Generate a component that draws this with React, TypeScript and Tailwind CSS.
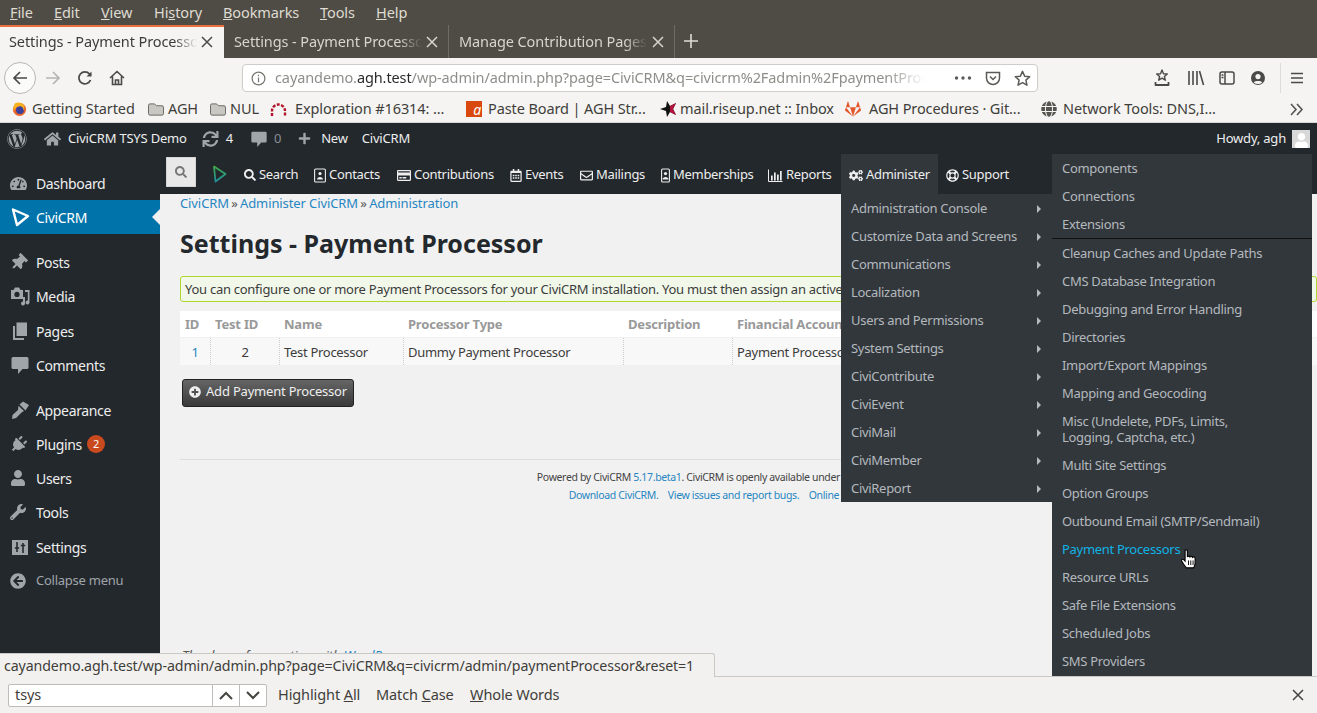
import { ReactNode } from 'react';
import {
  FaCogs,
  FaFolder,
  FaGitlab,
  FaGlobe,
  FaHome,
  FaPlug,
  FaPlus,
  FaPlusCircle,
  FaRegCalendarAlt,
  FaRegCreditCard,
  FaRegEnvelope,
  FaRegLifeRing,
  FaSearch,
  FaSync,
  FaTachometerAlt,
  FaThumbtack,
  FaUser,
  FaWordpress,
  FaWrench,
  FaArrowCircleLeft,
} from 'react-icons/fa';

const CiviLogo = ({ className }: { className: string }) => (
  <svg className={className} viewBox="0 0 20 20" fill="none" stroke="currentColor" strokeWidth="2.4" strokeLinejoin="round">
    <path d="M3 2.5 L18 9 L7 18 Z" />
  </svg>
);

const NavLogo = () => (
  <svg className="ml-[16px] mr-[17px]" width="15" height="18" viewBox="0 0 15 18" fill="none" strokeWidth="1.7" strokeLinejoin="round">
    <defs>
      <linearGradient id="civi-nav" x1="0" y1="0" x2="0" y2="1">
        <stop offset="0" stopColor="#3fae49" />
        <stop offset="1" stopColor="#1f8f9e" />
      </linearGradient>
    </defs>
    <path d="M2 1.5 L13.5 9 L3.5 16.5 Z" stroke="url(#civi-nav)" />
  </svg>
);

const CommentIcon = ({ className }: { className: string }) => (
  <svg className={className} viewBox="0 0 20 20" fill="currentColor">
    <path d="M3 2 H17 Q18.5 2 18.5 3.5 V12.5 Q18.5 14 17 14 H12.5 L8 19 V14 H3 Q1.5 14 1.5 12.5 V3.5 Q1.5 2 3 2 Z" />
  </svg>
);

const MediaIcon = () => (
  <svg className="h-[20px] w-[20px]" viewBox="0 0 20 20" fill="currentColor">
    <path
      fillRule="evenodd"
      d="M1 4 H3.5 L5 1.5 H9 L10.5 4 H13 V13 H1 Z M7 5.8 A2.6 2.6 0 1 0 7 11 A2.6 2.6 0 1 0 7 5.8 Z"
    />
    <path d="M15 4 H19.5 V16.5 A2 2 0 1 1 17.8 14.5 V6 H15 Z" />
    <path d="M13 11 H15 V17.5 A2 2 0 1 1 13 15.5 Z" />
  </svg>
);

const PagesIcon = () => (
  <svg className="h-[20px] w-[20px]" viewBox="0 0 20 20" fill="currentColor">
    <path d="M6.5 1.5 H17 V15 H6.5 Z" />
    <path d="M3 5 H5 V17 H14 V19 H3 Z" />
  </svg>
);

const BrushIcon = () => (
  <svg className="h-[20px] w-[20px]" viewBox="0 0 20 20" fill="currentColor">
    <path d="M9.5 4.5 L13 1.5 L19 5 L15.5 10.5 Z" />
    <path d="M8.5 5.8 L14 11 L11.5 12.5 L6 18 L2 19 L2.5 15 L8 10 Z" />
  </svg>
);

const SettingsIcon = () => (
  <svg className="h-[20px] w-[20px]" viewBox="0 0 20 20">
    <rect x="2" y="3" width="16" height="15" fill="currentColor" />
    <path d="M7 5 V15 M13 6 V16 M4.8 11 H9.2 M10.8 8.5 H15.2" stroke="#23282d" strokeWidth="1.6" fill="none" />
  </svg>
);

const BadgeIcon = ({ width }: { width: number }) => (
  <svg width={width} height="15" viewBox={`0 0 ${width} 15`} fill="none" stroke="currentColor" strokeWidth="1.1">
    <rect x="0.6" y="1" width={width - 1.2} height="13" rx="1" />
    <circle cx={width / 2} cy="5.6" r="1.6" fill="currentColor" stroke="none" />
    <path d={`M${width / 2 - 3} 11.5 C${width / 2 - 3} 8 ${width / 2 + 3} 8 ${width / 2 + 3} 11.5 Z`} fill="currentColor" stroke="none" />
  </svg>
);

const ChartIcon = () => (
  <svg width="15" height="13" viewBox="0 0 15 13" fill="currentColor">
    <path d="M0.5 0.5 V12.5 H14.5" fill="none" stroke="currentColor" strokeWidth="1" />
    <rect x="3" y="6.5" width="1.7" height="5" />
    <rect x="6" y="3.5" width="1.7" height="8" />
    <rect x="9" y="5.5" width="1.7" height="6" />
    <rect x="12" y="2" width="1.7" height="9.5" />
  </svg>
);

const FirefoxIcon = () => (
  <svg className="mr-[5px]" width="15" height="16" viewBox="0 0 16 16">
    <circle cx="8" cy="8.5" r="7" fill="#e8662b" />
    <circle cx="8.5" cy="9" r="4.2" fill="#3a3f9c" />
    <path d="M3 2 C2 5 1 7 2 10 C3 7 6 4.5 9 5 C11 5.3 12.5 7 12 9.5 C13.5 7.5 14 4 11 2 C8 0.5 5 1 3 2 Z" fill="#f7b01f" />
  </svg>
);

const Close = ({ className = '' }: { className?: string }) => (
  <svg className={className} width="12" height="12" viewBox="0 0 12 12" stroke="currentColor" strokeWidth="1.5">
    <path d="M1 1 L11 11 M11 1 L1 11" />
  </svg>
);

const MenuBar = () => {
  const items: [ReactNode, string][] = [
    [<><u>F</u>ile</>, 'w-[44px]'],
    [<><u>E</u>dit</>, 'w-[47px]'],
    [<><u>V</u>iew</>, 'w-[53px]'],
    [<>Hi<u>s</u>tory</>, 'w-[69px]'],
    [<><u>B</u>ookmarks</>, 'w-[97px]'],
    [<><u>T</u>ools</>, 'w-[56px]'],
    [<><u>H</u>elp</>, 'w-[50px]'],
  ];
  return (
    <div className="flex h-[25px] shrink-0 items-center bg-[#4f4c45] pl-[10px] text-[14.5px] tracking-[-0.1px] text-[#dfdbd2]">
      {items.map(([label, width], i) => (
        <span key={i} className={width}>{label}</span>
      ))}
    </div>
  );
};

const tabFade = 'w-[188px] overflow-hidden whitespace-nowrap [mask-image:linear-gradient(to_right,black_88%,transparent)]';

const TabBar = () => (
  <div className="flex h-[33px] shrink-0 bg-[#4f4c45] text-[14.5px] tracking-[-0.1px]">
    <div className="flex w-[224px] items-center border-t-2 border-[#e8703a] bg-[#f5f4f2] pb-[2px] pl-[9px] pr-[11px] text-[#3d3c38]">
      <span className={tabFade}>Settings - Payment Processor</span>
      <Close className="ml-auto text-[#4a4a46]" />
    </div>
    <div className="flex w-[225px] items-center border-r border-[#6f6c65] pl-[10px] pr-[10px] text-[#d8d5cd]">
      <span className={tabFade}>Settings - Payment Processor</span>
      <Close className="ml-auto text-[#d8d5cd]" />
    </div>
    <div className="flex w-[226px] items-center border-r border-[#6f6c65] pl-[10px] pr-[10px] text-[#d8d5cd]">
      <span className={tabFade}>Manage Contribution Pages</span>
      <Close className="ml-auto text-[#d8d5cd]" />
    </div>
    <svg className="ml-[8px] mt-[8px] text-[#dfdbd2]" width="16" height="16" viewBox="0 0 16 16" stroke="currentColor" strokeWidth="1.6">
      <path d="M8 1 V15 M1 8 H15" />
    </svg>
  </div>
);

const Toolbar = () => (
  <div className="flex h-[38px] shrink-0 items-center bg-[#f5f4f2] pt-[2px] text-[#4a4a46]">
    <div className="ml-[4px] flex h-[32px] w-[32px] items-center justify-center rounded-full border border-[#b8b6b2] bg-[#fbfbfa]">
      <svg width="16" height="16" viewBox="0 0 16 16" fill="none" stroke="currentColor" strokeWidth="1.7">
        <path d="M15 8 H2 M8 2 L2 8 L8 14" />
      </svg>
    </div>
    <svg className="ml-[9px] text-[#b5b4b0]" width="16" height="16" viewBox="0 0 16 16" fill="none" stroke="currentColor" strokeWidth="1.7">
      <path d="M1 8 H14 M8 2 L14 8 L8 14" />
    </svg>
    <svg className="ml-[16px]" width="16" height="16" viewBox="0 0 16 16" fill="none" stroke="currentColor" strokeWidth="1.8">
      <path d="M13.5 10 A6 6 0 1 1 12.5 4 L14 5.5" />
      <path d="M14.5 1.5 V6.5 H9.5" fill="currentColor" stroke="none" />
    </svg>
    <svg className="ml-[16px]" width="16" height="16" viewBox="0 0 16 16" fill="none" stroke="currentColor" strokeWidth="1.6">
      <path d="M1 8 L8 1.5 L15 8 M3.5 6.5 V14.5 H12.5 V6.5 M6.5 14.5 V10 H9.5 V14.5" />
    </svg>
    <div className="ml-[117px] flex h-[28px] w-[796px] items-center rounded-[4px] border border-[#cfcdc9] bg-white pl-[8px] text-[14.5px] tracking-[-0.1px]">
      <svg className="text-[#77766f]" width="15" height="15" viewBox="0 0 16 16" fill="none" stroke="currentColor" strokeWidth="1.3">
        <circle cx="8" cy="8" r="6.8" />
        <path d="M8 7 V12 M8 4 V5.6" />
      </svg>
      <span className="ml-[9px] w-[650px] overflow-hidden whitespace-nowrap text-[#8e8e8a] [mask-image:linear-gradient(to_right,black_94%,transparent)]">
        cayandemo.<span className="text-[#2b2b2b]">agh.test</span>/wp-admin/admin.php?page=CiviCRM&amp;q=civicrm%2Fadmin%2FpaymentProcessor
      </span>
      <span className="ml-auto flex items-center gap-[13px] pr-[6px] text-[#5a5a56]">
        <svg width="18" height="4" viewBox="0 0 18 4" fill="currentColor">
          <circle cx="2.5" cy="2" r="1.7" />
          <circle cx="9" cy="2" r="1.7" />
          <circle cx="15.5" cy="2" r="1.7" />
        </svg>
        <svg width="16" height="16" viewBox="0 0 16 16" fill="none" stroke="currentColor" strokeWidth="1.5">
          <path d="M1.5 2.5 H14.5 V8 A6.5 6.5 0 0 1 1.5 8 Z M5 6.5 L8 9.5 L11 6.5" />
        </svg>
        <svg width="17" height="17" viewBox="0 0 16 16" fill="none" stroke="currentColor" strokeWidth="1.4" strokeLinejoin="round">
          <path d="M8 1.3 L10 5.8 L14.8 6.3 L11.2 9.5 L12.2 14.3 L8 11.8 L3.8 14.3 L4.8 9.5 L1.2 6.3 L6 5.8 Z" />
        </svg>
      </span>
    </div>
    <svg className="ml-[116px]" width="16" height="18" viewBox="0 0 16 18" fill="none" stroke="currentColor" strokeWidth="1.4" strokeLinejoin="round">
      <path d="M8 1 L9.5 4.7 L13.3 5 L10.4 7.5 L11.3 11.2 L8 9.2 L4.7 11.2 L5.6 7.5 L2.7 5 L6.5 4.7 Z" />
      <path d="M1.5 13 V16 H14.5 V13" strokeWidth="1.8" />
    </svg>
    <svg className="ml-[17px]" width="18" height="16" viewBox="0 0 18 16" fill="none" stroke="currentColor" strokeWidth="1.6">
      <path d="M2 1 V15 M6 1 V15 M10 1 V15 M12.5 1 L16.5 15" />
    </svg>
    <svg className="ml-[14px]" width="16" height="16" viewBox="0 0 16 16" fill="none" stroke="currentColor" strokeWidth="1.5">
      <rect x="1" y="2" width="14" height="12" rx="2" />
      <path d="M6 2 V14 M2.5 5 H4.5 M2.5 7.5 H4.5" />
    </svg>
    <svg className="ml-[15px]" width="16" height="16" viewBox="0 0 16 16" fill="currentColor">
      <path fillRule="evenodd" d="M8 1 A7 7 0 1 1 8 15 A7 7 0 1 1 8 1 Z M8 4 A2.6 2.6 0 1 0 8 9.2 A2.6 2.6 0 1 0 8 4 Z M3.8 12.4 A6 6 0 0 0 12.2 12.4 C11 10.5 5 10.5 3.8 12.4 Z" />
    </svg>
    <div className="ml-[14px] h-[30px] w-px bg-[#dedcd8]" />
    <svg className="ml-[9px]" width="14" height="14" viewBox="0 0 14 14" stroke="currentColor" strokeWidth="1.7">
      <path d="M1 2.5 H13 M1 7 H13 M1 11.5 H13" />
    </svg>
  </div>
);

const Bookmark = ({ icon, label, width }: { icon: ReactNode; label: string; width: string }) => (
  <div className={`flex items-center ${width}`}>
    {icon}
    <span className="whitespace-nowrap">{label}</span>
  </div>
);

const folder = <FaFolder className="mr-[4px] h-[15px] w-[16px] text-[#c9c7c1] [stroke:#5d5c58] [stroke-width:30px]" />;

const BookmarksBar = () => (
  <div className="flex h-[26px] shrink-0 items-center bg-[#f5f4f2] pl-[12px] text-[14.5px] tracking-[-0.1px] text-[#3f3e3a]">
    <Bookmark width="w-[136px]" label="Getting Started" icon={<FirefoxIcon />} />
    <Bookmark width="w-[62px]" label="AGH" icon={folder} />
    <Bookmark width="w-[60px]" label="NUL" icon={folder} />
    <Bookmark
      width="w-[196px]"
      label="Exploration #16314: ..."
      icon={
        <svg className="mr-[8px]" width="17" height="15" viewBox="0 0 17 15" fill="none" stroke="#b3132b" strokeWidth="2.4" strokeDasharray="3 1.4">
          <path d="M2 14 V9 A6.5 6.5 0 0 1 15 9 V14" />
        </svg>
      }
    />
    <Bookmark
      width="w-[194px]"
      label="Paste Board | AGH Str..."
      icon={
        <span className="mr-[6px] flex h-[16px] w-[16px] items-end justify-end bg-[#d9480f] pr-[1px] text-[14px] italic leading-[14px] text-white">a</span>
      }
    />
    <Bookmark
      width="w-[185px]"
      label="mail.riseup.net :: Inbox"
      icon={
        <svg className="mr-[4px]" width="16" height="18" viewBox="0 0 16 18">
          <path d="M0 9 L6 7 L7 1 L10 6 L16 3 L13 9 L16 15 L10 12 L7 17 L6 11 Z" fill="#111" />
          <path d="M10 6 L16 3 L13 9 L16 15 L10 12 Z" fill="#b3123d" />
        </svg>
      }
    />
    <Bookmark width="w-[196px]" label="AGH Procedures · Git..." icon={<FaGitlab className="mr-[8px] h-[16px] w-[16px] text-[#e2572b]" />} />
    <Bookmark width="w-[230px]" label="Network Tools: DNS,I..." icon={<FaGlobe className="mr-[6px] h-[16px] w-[16px] text-[#55554f]" />} />
    <svg className="ml-[18px] text-[#55554f]" width="15" height="13" viewBox="0 0 15 13" fill="none" stroke="currentColor" strokeWidth="1.6">
      <path d="M2 1 L7 6.5 L2 12 M8 1 L13 6.5 L8 12" />
    </svg>
  </div>
);

const AdminBar = () => (
  <div className="flex h-[32px] shrink-0 items-center border-t border-[#d9d8d5] bg-[#23282d] pl-[7px] pr-[7px] text-[13px] tracking-[-0.2px] text-[#eeeeee]">
    <FaWordpress className="h-[20px] w-[20px] text-[#a0a5aa]" />
    <FaHome className="ml-[17px] h-[16px] w-[17px] text-[#a0a5aa]" />
    <span className="ml-[7px]">CiviCRM TSYS Demo</span>
    <FaSync className="ml-[15px] h-[16px] w-[17px] text-[#a0a5aa]" />
    <span className="ml-[7px]">4</span>
    <CommentIcon className="ml-[17px] h-[18px] w-[18px] text-[#a0a5aa]" />
    <span className="ml-[6px] text-[#888d92]">0</span>
    <FaPlus className="ml-[17px] h-[13px] w-[13px] text-[#a0a5aa]" />
    <span className="ml-[10px]">New</span>
    <span className="ml-[14px]">CiviCRM</span>
    <span className="ml-auto mr-[6px]">Howdy, agh</span>
    <div className="flex h-[18px] w-[18px] items-end justify-center overflow-hidden bg-[#d8d8d8]">
      <FaUser className="h-[15px] w-[15px] text-white" />
    </div>
  </div>
);

type SideItem = { label: string; icon: ReactNode; gap?: boolean; nudge?: boolean; active?: boolean; badge?: string };

const sideItems: SideItem[] = [
  { label: 'Dashboard', icon: <FaTachometerAlt className="h-[17px] w-[17px]" /> },
  { label: 'CiviCRM', icon: <CiviLogo className="h-[20px] w-[20px]" />, active: true },
  { label: 'Posts', icon: <FaThumbtack className="h-[17px] w-[17px] rotate-45" />, gap: true },
  { label: 'Media', icon: <MediaIcon /> },
  { label: 'Pages', icon: <PagesIcon />, nudge: true },
  { label: 'Comments', icon: <CommentIcon className="h-[20px] w-[20px]" /> },
  { label: 'Appearance', icon: <BrushIcon />, gap: true },
  { label: 'Plugins', icon: <FaPlug className="h-[17px] w-[17px] rotate-45" />, badge: '2' },
  { label: 'Users', icon: <FaUser className="h-[16px] w-[16px]" /> },
  { label: 'Tools', icon: <FaWrench className="h-[16px] w-[16px]" /> },
  { label: 'Settings', icon: <SettingsIcon />, nudge: true },
];

const Sidebar = () => (
  <div className="w-[160px] shrink-0 bg-[#23282d] pt-[12px] text-[14px] tracking-[-0.35px] text-[#eeeeee]">
    {sideItems.map((item) => (
      <div
        key={item.label}
        className={`relative flex h-[34px] items-center pl-[10px] ${item.gap ? 'mt-[11px]' : ''} ${item.nudge ? 'mt-[1px]' : ''} ${
          item.active ? 'bg-[#0073aa] text-white' : ''
        }`}
      >
        <span className={`flex w-[26px] justify-start ${item.active ? 'text-white' : 'text-[#a0a5aa]'}`}>{item.icon}</span>
        <span>{item.label}</span>
        {item.badge ? (
          <span className="ml-[5px] flex h-[18px] w-[18px] items-center justify-center rounded-full bg-[#ca4a1f] text-[11px] text-white">
            {item.badge}
          </span>
        ) : null}
        {item.active ? (
          <span className="absolute right-0 top-[9px] h-0 w-0 border-y-[8px] border-r-[8px] border-y-transparent border-r-[#f1f1f1]" />
        ) : null}
      </div>
    ))}
    <div className="flex h-[33px] items-center pl-[10px] text-[13px] tracking-[-0.25px] text-[#a0a5aa]">
      <FaArrowCircleLeft className="mr-[10px] h-[16px] w-[16px]" />
      <span>Collapse menu</span>
    </div>
  </div>
);

const navItems: { label: string; icon: ReactNode; width: string }[] = [
  { label: 'Search', icon: <FaSearch className="h-[12px] w-[12px]" />, width: 'w-[70px]' },
  { label: 'Contacts', icon: <BadgeIcon width={12} />, width: 'w-[83px]' },
  { label: 'Contributions', icon: <FaRegCreditCard className="h-[13px] w-[14px]" />, width: 'w-[113px]' },
  { label: 'Events', icon: <FaRegCalendarAlt className="h-[13px] w-[12px]" />, width: 'w-[70px]' },
  { label: 'Mailings', icon: <FaRegEnvelope className="h-[13px] w-[13px]" />, width: 'w-[81px]' },
  { label: 'Memberships', icon: <BadgeIcon width={9} />, width: 'w-[107px]' },
  { label: 'Reports', icon: <ChartIcon />, width: 'w-[73px]' },
];

const adminMenu = [
  'Administration Console',
  'Customize Data and Screens',
  'Communications',
  'Localization',
  'Users and Permissions',
  'System Settings',
  'CiviContribute',
  'CiviEvent',
  'CiviMail',
  'CiviMember',
  'CiviReport',
];

const CiviNav = () => (
  <div className="relative flex h-[40px] shrink-0 items-center bg-[#23282d] pl-[6px] text-[13px] tracking-[-0.3px] text-[#eeeeee]">
    <div className="-mt-[4px] flex h-[30px] w-[30px] items-center justify-center border border-[#d5d5d5] bg-[#e8e8e8] text-[#777]">
      <FaSearch className="h-[12px] w-[12px]" />
    </div>
    <NavLogo />
    {navItems.map((item) => (
      <div key={item.label} className={`mt-[2px] flex items-center gap-[3px] ${item.width}`}>
        {item.icon}
        <span>{item.label}</span>
      </div>
    ))}
    <div className="relative flex h-[40px] w-[97px] items-center gap-[3px] bg-[#32373c] pl-[8px] pt-[2px]">
      <FaCogs className="h-[13px] w-[14px]" />
      <span>Administer</span>
      <div className="absolute left-0 top-[40px] z-10 w-[211px] bg-[#32373c] text-[#b4b9be]">
        {adminMenu.map((label) => (
          <div key={label} className="flex h-[28px] items-center justify-between pl-[10px] pr-[11px] pt-[2px]">
            <span className="whitespace-nowrap">{label}</span>
            <span className="h-0 w-0 border-y-[4px] border-l-[4px] border-y-transparent border-l-[#b4b9be]" />
          </div>
        ))}
      </div>
    </div>
    <div className="mt-[2px] flex items-center gap-[3px] pl-[8px]">
      <FaRegLifeRing className="h-[13px] w-[13px]" />
      <span>Support</span>
    </div>
  </div>
);

const settingsTop = ['Components', 'Connections', 'Extensions'];
const settingsRest = [
  'Cleanup Caches and Update Paths',
  'CMS Database Integration',
  'Debugging and Error Handling',
  'Directories',
  'Import/Export Mappings',
  'Mapping and Geocoding',
];
const settingsEnd = [
  'Multi Site Settings',
  'Option Groups',
  'Outbound Email (SMTP/Sendmail)',
  'Payment Processors',
  'Resource URLs',
  'Safe File Extensions',
  'Scheduled Jobs',
  'SMS Providers',
];

const SubRow = ({ label }: { label: string }) => (
  <div className={`flex h-[28px] items-center pt-[2px] ${label === 'Payment Processors' ? 'text-[#10b3e6]' : ''}`}>{label}</div>
);

const SettingsMenu = () => (
  <div className="absolute bottom-0 left-[1052px] top-[32px] z-10 w-[260px] overflow-hidden bg-[#32373c] pl-[10px] text-[13px] tracking-[-0.3px] text-[#b4b9be]">
    {settingsTop.map((label) => (
      <SubRow key={label} label={label} />
    ))}
    <div className="-ml-[10px] h-px bg-[#111]" />
    {settingsRest.map((label) => (
      <SubRow key={label} label={label} />
    ))}
    <div className="py-[6px] leading-[16px]">
      Misc (Undelete, PDFs, Limits,
      <br />
      Logging, Captcha, etc.)
    </div>
    {settingsEnd.map((label) => (
      <SubRow key={label} label={label} />
    ))}
  </div>
);

const HandCursor = () => (
  <svg className="absolute left-[1180px] top-[427px] z-20" width="17" height="20" viewBox="0 0 14 17.5">
    <path
      d="M4 1.5 C4 .5 6 .5 6 1.5 V7 C6.5 6 8 6 8.3 7 C9 6 10.3 6.3 10.5 7.3 C11.3 6.6 12.8 7 12.8 8.2 V12 C12.8 14.5 12 15.5 11.5 16.5 H5 C4 15 2 12.5 1 10.5 C.5 9 2 8.5 3 9.5 L4 10.5 Z"
      fill="#fff"
      stroke="#000"
      strokeWidth="1"
    />
    <path d="M7 10 V14 M9 10 V14 M11 10 V14" stroke="#000" strokeWidth="0.8" />
  </svg>
);

const rowCell = 'flex h-full items-center border-r border-dotted border-[#cccccc] px-[4px] pt-[2px]';

const MainContent = () => (
  <div className="min-w-0 flex-1 overflow-hidden bg-[#f1f1f1]">
    <CiviNav />
    <div className="pl-[20px] text-[13px] tracking-[-0.3px] text-[#3c434a]">
      <div className="h-[18px] leading-[18px] tracking-[-0.1px] text-[#2786c2]">
        CiviCRM <span className="-mx-[1px] text-[#555]">»</span> Administer CiviCRM <span className="-mx-[1px] text-[#555]">»</span> Administration
      </div>
      <h1 className="mt-[16px] h-[31px] text-[25px] font-bold leading-[31px] tracking-normal text-[#23282d]">Settings - Payment Processor</h1>
      <div className="mt-[17px] flex h-[26px] w-[1137px] items-center whitespace-nowrap rounded-[3px] border border-[#b0d730] bg-[#f1f8ea] pl-[4px] pt-[2px] tracking-[-0.27px] text-[#3c3c3c]">
        You can configure one or more Payment Processors for your CiviCRM installation. You must then assign an active Payment Processor to each Online Contribution Page.
      </div>
      <div className="mt-[9px] flex h-[26px] w-[1137px] items-center bg-white pt-[1px] font-bold tracking-[-0.2px] text-[#999999]">
        <span className="w-[31px] pl-[5px]">ID</span>
        <span className="w-[69px] pl-[4px]">Test ID</span>
        <span className="w-[124px] pl-[4px]">Name</span>
        <span className="w-[220px] pl-[4px]">Processor Type</span>
        <span className="w-[109px] pl-[4px]">Description</span>
        <span className="whitespace-nowrap pl-[4px]">Financial Account</span>
      </div>
      <div className="mt-px flex h-[27px] w-[1137px] items-center bg-[#f8f8f8] text-[#3c3c3c]">
        <span className={`${rowCell} w-[31px] justify-center text-[#2786c2]`}>1</span>
        <span className={`${rowCell} w-[69px] justify-center`}>2</span>
        <span className={`${rowCell} w-[124px]`}>Test Processor</span>
        <span className={`${rowCell} w-[220px]`}>Dummy Payment Processor</span>
        <span className={`${rowCell} w-[109px]`} />
        <span className="whitespace-nowrap pl-[4px] pt-[2px]">Payment Processor Account</span>
      </div>
      <button className="ml-[2px] mt-[14px] flex h-[28px] w-[172px] items-center rounded-[3px] border border-[#222] bg-gradient-to-b from-[#666666] to-[#3a3a3a] pb-[2px] pl-[6px] tracking-[-0.2px] text-[#eeeeee]">
        <FaPlusCircle className="mr-[5px] h-[12px] w-[12px]" />
        Add Payment Processor
      </button>
      <div className="mr-[20px] mt-[52px] h-px bg-[#dddddd]" />
      <div className="mr-[20px] mt-[8px] pl-[8px] text-center text-[10.5px] leading-[18px] tracking-[-0.35px] text-[#444]">
        <p>
          Powered by CiviCRM <span className="text-[#2786c2]">5.17.beta1</span>. CiviCRM is openly available under the GNU AGPL License.
        </p>
        <p className="text-[#2786c2]">
          Download CiviCRM.&nbsp;&nbsp;&nbsp;&nbsp;View issues and report bugs.&nbsp;&nbsp;&nbsp;&nbsp;Online Documentation.
        </p>
      </div>
      <p className="ml-[2px] mt-[142px] text-[13px] italic leading-[18px] tracking-normal text-[#555]">
        Thank you for creating with <span className="text-[#2786c2]">WordPress</span>.
      </p>
    </div>
  </div>
);

const FindButton = ({ path }: { path: string }) => (
  <div className="flex h-full w-[27px] items-center justify-center border-l border-[#bdbcb8] text-[#44443f]">
    <svg width="14" height="9" viewBox="0 0 14 9" fill="none" stroke="currentColor" strokeWidth="2">
      <path d={path} />
    </svg>
  </div>
);

const FindBar = () => (
  <div className="relative flex h-[37px] shrink-0 items-center border-t border-[#c9c8c4] bg-[#f2f1ef] pl-[8px] pr-[13px] text-[14.5px] tracking-[-0.1px] text-[#3f3e3a]">
    <div className="absolute -top-[24px] left-0 z-30 flex h-[24px] w-[715px] items-center rounded-tr-[3px] border border-b-0 border-l-0 border-[#c9c8c4] bg-[#f2f1ef] pl-[4px] text-[14.2px] text-[#3f3e3a]">
      cayandemo.agh.test/wp-admin/admin.php?page=CiviCRM&amp;q=civicrm/admin/paymentProcessor&amp;reset=1
    </div>
    <div className="flex h-[23px] w-[259px] items-center rounded-[2px] border border-[#bdbcb8] bg-white pl-[6px]">
      <span className="w-[198px]">tsys</span>
      <FindButton path="M1 8 L7 2 L13 8" />
      <FindButton path="M1 1 L7 7 L13 1" />
    </div>
    <span className="ml-[11px] w-[98px]">
      Highlight <u>A</u>ll
    </span>
    <span className="w-[94px]">
      Match <u>C</u>ase
    </span>
    <span>
      <u>W</u>hole Words
    </span>
    <Close className="ml-auto text-[#44443f]" />
  </div>
);

export default function App() {
  return (
    <div className="relative flex h-[713px] w-[1317px] flex-col overflow-hidden font-['Noto_Sans',sans-serif]">
      <MenuBar />
      <TabBar />
      <Toolbar />
      <BookmarksBar />
      <div className="relative flex min-h-0 flex-1 flex-col">
        <AdminBar />
        <div className="flex min-h-0 flex-1">
          <Sidebar />
          <MainContent />
        </div>
        <SettingsMenu />
        <HandCursor />
      </div>
      <FindBar />
    </div>
  );
}
